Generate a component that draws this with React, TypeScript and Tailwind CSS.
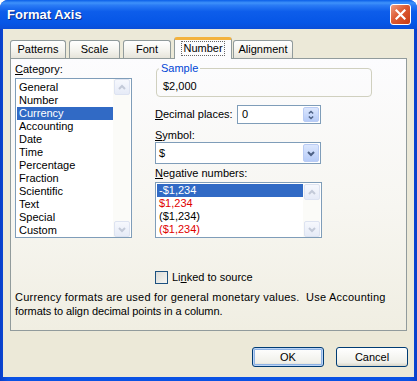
const font = "font-['Liberation_Sans',Arial,sans-serif]";

function Chevron({ dir, color, size = 7 }: { dir: "up" | "down"; color: string; size?: number }) {
  const d = dir === "up" ? "M1 5 L4 2 L7 5" : "M1 2 L4 5 L7 2";
  return (
    <svg width={size + 1} height={size} viewBox="0 0 8 7">
      <path d={d} fill="none" stroke={color} strokeWidth="2" />
    </svg>
  );
}

function PaleBtn({ dir }: { dir: "up" | "down" }) {
  return (
    <div className="w-[16px] h-[16px] rounded-[2px] border border-[#DDE3F1] bg-[linear-gradient(to_bottom,#F6F8FD,#E6EBF7)] flex items-center justify-center">
      <Chevron dir={dir} color="#C3CAD8" />
    </div>
  );
}

function PaleScroll({ tall }: { tall: number }) {
  return (
    <div className="w-[17px] flex flex-col justify-between bg-[#FBFBF8] pl-[1px]" style={{ height: tall }}>
      <PaleBtn dir="up" />
      <PaleBtn dir="down" />
    </div>
  );
}

function BlueBtn({ children, h }: { children: React.ReactNode; h: string }) {
  return (
    <div className={`w-[16px] ${h} rounded-[2px] border border-[#BACCF4] bg-[linear-gradient(to_bottom,#DCE7FE,#B7CCF8)] flex flex-col items-center justify-center`}>
      {children}
    </div>
  );
}

function Tab({ label, w, active }: { label: string; w: string; active?: boolean }) {
  if (active) {
    return (
      <div className={`${w} h-[22px] -mb-px relative z-10 rounded-t-[3px] border-x border-[#919B9C] border-t-[3px] border-t-[#F3B23D] bg-[#FCFCFE] flex justify-center pt-[1px]`}>
        <span className="h-[15px] px-[1px] border border-dotted border-[#666] leading-[13px]">{label}</span>
      </div>
    );
  }
  return (
    <div className={`${w} h-[18px] rounded-t-[3px] border-x border-t border-[#919B9C] bg-[linear-gradient(to_bottom,#FFFFFF,#F3F2EC_60%,#E6E4DA)] flex items-center justify-center`}>
      {label}
    </div>
  );
}

export default function App() {
  const categories = ["General", "Number", "Currency", "Accounting", "Date", "Time", "Percentage", "Fraction", "Scientific", "Text", "Special", "Custom"];
  const negatives = [
    { t: "-$1,234", c: "text-white bg-[#316AC5]" },
    { t: "$1,234", c: "text-[#E00000]" },
    { t: "($1,234)", c: "text-black" },
    { t: "($1,234)", c: "text-[#E00000]" },
  ];

  return (
    <div className={`w-[417px] h-[381px] rounded-t-[8px] bg-[linear-gradient(to_right,#0A3FC8,#0A52E4_2%,#0A52E4_98%,#0A3FC8)] flex flex-col text-[11px] text-black ${font}`}>
      {/* title bar */}
      <div className="h-[29px] shrink-0 rounded-t-[8px] bg-[linear-gradient(to_bottom,#0A5EE8_0%,#3F92FA_10%,#2A7BF5_18%,#0D5DEB_40%,#0656E6_80%,#0A4ED8_100%)] flex items-center justify-between pl-[7px] pr-[6px]">
        <span className="text-white font-bold text-[13px] leading-none [text-shadow:1px_1px_0_#0A2C8C]">Format Axis</span>
        <div className="w-[21px] h-[21px] rounded-[3px] border border-white bg-[linear-gradient(135deg,#EE9C80,#DD5A32_45%,#C83A12)] flex items-center justify-center">
          <svg width="11" height="11" viewBox="0 0 11 11">
            <path d="M1.5 1.5 L9.5 9.5 M9.5 1.5 L1.5 9.5" stroke="white" strokeWidth="2.2" strokeLinecap="square" />
          </svg>
        </div>
      </div>

      {/* client */}
      <div className="flex-1 mx-[3px] mb-[4px] bg-[#ECE9D8] flex flex-col">
        <div className="flex items-end pl-[7px] pt-[8px] h-[29px]">
          <Tab label="Patterns" w="w-[56px]" />
          <div className="w-[3px]" />
          <Tab label="Scale" w="w-[51px]" />
          <div className="w-[3px]" />
          <Tab label="Font" w="w-[48px]" />
          <div className="w-[3px]" />
          <Tab label="Number" w="w-[58px]" active />
          <div className="w-[1px]" />
          <Tab label="Alignment" w="w-[60px]" />
        </div>

        {/* panel */}
        <div className="mx-[7px] h-[273px] border border-[#919B9C] bg-[linear-gradient(to_bottom,#FCFCFE,#F7F6F1_55%,#F0EEE2)] px-[4px] pt-[4px] flex flex-col leading-[13px]">
          <div className="flex">
            {/* left */}
            <div className="w-[117px] flex flex-col">
              <div className="h-[13px]"><u>C</u>ategory:</div>
              <div className="mt-[2px] h-[160px] border border-[#7F9DB9] bg-white flex pt-[2px] pl-[1px] pr-[1px]">
                <div className="flex-1 flex flex-col">
                  {categories.map((c) => (
                    <div key={c} className={`h-[13px] pl-[2px] ${c === "Currency" ? "bg-[#316AC5] text-white" : ""}`}>{c}</div>
                  ))}
                </div>
                <div className="-mt-[2px]"><PaleScroll tall={158} /></div>
              </div>
            </div>

            {/* right */}
            <div className="ml-[23px] -mt-[1px] flex flex-col">
              <fieldset className="ml-[1px] w-[216px] border border-[#D0D0BF] rounded-[4px] pl-[6px] pb-[3px]">
                <legend className="-ml-[4px] px-[2px] text-[#0046D5] leading-[13px]">Sample</legend>
                <div className="pt-[5px] h-[18px]">$2,000</div>
              </fieldset>

              <div className="mt-[8px] w-[166px] h-[19px] flex items-center justify-between">
                <span><u>D</u>ecimal places:</span>
                <div className="w-[84px] h-[19px] border border-[#7F9DB9] bg-white flex items-center pl-[4px] pr-[1px]">
                  <span className="flex-1">0</span>
                  <BlueBtn h="h-[15px]">
                    <Chevron dir="up" color="#4D6185" size={5} />
                    <Chevron dir="down" color="#4D6185" size={5} />
                  </BlueBtn>
                </div>
              </div>

              <div className="mt-[5px] h-[13px]"><u>S</u>ymbol:</div>
              <div className="w-[166px] h-[22px] border border-[#7F9DB9] bg-white flex items-center pl-[3px] pr-[1px]">
                <span className="flex-1">$</span>
                <BlueBtn h="h-[18px]">
                  <Chevron dir="down" color="#4D6185" />
                </BlueBtn>
              </div>

              <div className="mt-[3px] h-[13px]"><u>N</u>egative numbers:</div>
              <div className="mt-[2px] w-[167px] h-[56px] border border-[#7F9DB9] bg-white flex pt-[1px] pl-[1px] pr-[1px]">
                <div className="flex-1 flex flex-col">
                  {negatives.map((n, i) => (
                    <div key={i} className={`h-[13px] pl-[2px] ${n.c}`}>{n.t}</div>
                  ))}
                </div>
                <div className="-mt-[1px] pt-[1px]"><PaleScroll tall={53} /></div>
              </div>
            </div>
          </div>

          <div className="mt-[33px] ml-[140px] h-[13px] flex items-center">
            <div className="w-[13px] h-[13px] border border-[#1C5180] bg-[linear-gradient(135deg,#DCDCD7,#F5F5F2)]" />
            <span className="ml-[4px]">Li<u>n</u>ked to source</span>
          </div>

          <div className="mt-[6px] leading-[14px] whitespace-pre">
            <div className="tracking-[0.22px]">Currency formats are used for general monetary values.  Use Accounting</div>
            <div className="tracking-[-0.08px]">formats to align decimal points in a column.</div>
          </div>
        </div>

        {/* buttons */}
        <div className="mt-[16px] flex justify-end gap-[12px] pr-[6px]">
          <div className="w-[72px] h-[20px] rounded-[3px] border border-[#003C74] bg-[linear-gradient(to_bottom,#FFFFFF,#F0F0EA_80%,#D8D5C8)] shadow-[inset_0_0_0_1px_#BCD4F6,inset_0_0_0_2px_#8DB2E3] flex items-center justify-center">OK</div>
          <div className="w-[72px] h-[20px] rounded-[3px] border border-[#003C74] bg-[linear-gradient(to_bottom,#FFFFFF,#F0F0EA_80%,#D8D5C8)] flex items-center justify-center">Cancel</div>
        </div>
      </div>
    </div>
  );
}
